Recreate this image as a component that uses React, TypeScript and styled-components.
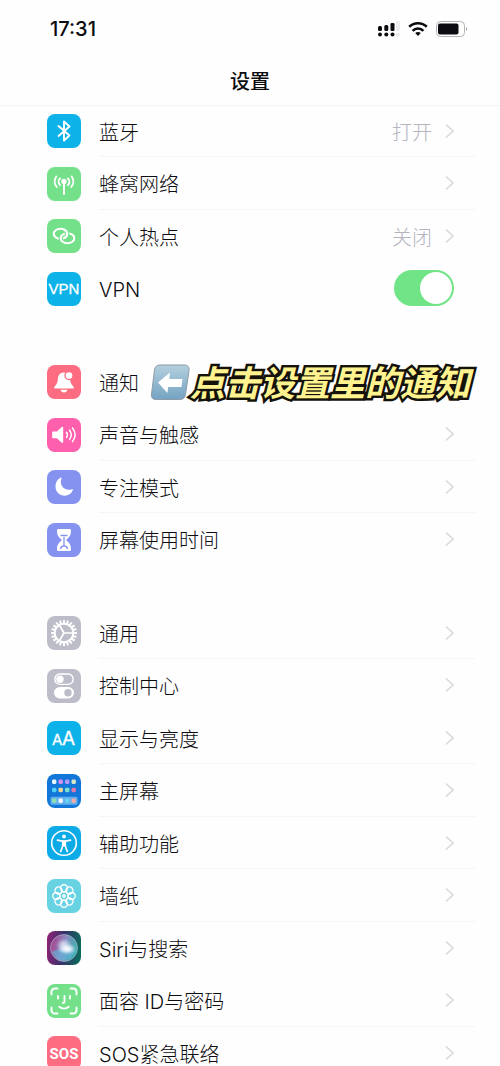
import React from "react";
import styled, { createGlobalStyle } from "styled-components";

const GlobalStyle = createGlobalStyle`
  *, *::before, *::after { box-sizing: border-box; }
  body {
    margin: 0;
    background: #fefefe;
    color: #0c0c10;
    font-family: Inter, "Noto Sans CJK SC", sans-serif;
  }
`;

const Screen = styled.div`
  display: flex;
  flex-direction: column;
  height: 100vh;
  overflow: hidden;
`;

const Header = styled.header`
  flex: none;
  position: relative;
  z-index: 1;
  box-shadow: 0 1px 1px #f4f4f6;
`;

const StatusBar = styled.div`
  display: flex;
  align-items: center;
  justify-content: space-between;
  height: 57px;
  padding: 0 32px 0 50px;
`;

const Clock = styled.time`
  font-size: 20px;
  line-height: 24px;
  font-weight: 500;
`;

const StatusIcons = styled.div`
  display: flex;
  align-items: center;
  gap: 8px;
  svg { display: block; }
`;

const Title = styled.h1`
  margin: 0;
  padding-top: 2px;
  height: 48px;
  font-size: 20px;
  line-height: 46px;
  font-weight: 500;
  text-align: center;
`;

const Groups = styled.main`
  flex: 1;
  min-height: 0;
  overflow: hidden;
  display: flex;
  flex-direction: column;
  gap: 41px;
  padding: 0 24px 0 47px;
`;

const Group = styled.ul`
  flex: none;
  display: grid;
  grid-auto-rows: 52px 53px;
  margin: 0;
  padding: 0;
  list-style: none;
`;

const Item = styled.li`
  position: relative;
  display: grid;
`;

const rowLayout = `
  display: flex;
  align-items: center;
  gap: 18px;
  min-width: 0;
  color: inherit;
  text-decoration: none;
`;

const RowLink = styled.a`${rowLayout}`;
const RowLabel = styled.label`${rowLayout}`;

const Tile = styled.svg`
  flex: none;
  display: block;
  width: 34px;
  height: 34px;
  border-radius: 8px;
`;

const Body = styled.span<{ $line?: boolean }>`
  flex: 1;
  align-self: stretch;
  display: flex;
  align-items: center;
  padding: 0 22px 0 0;
  border-bottom: 1px solid ${(p) => (p.$line ? "#f6f6f8" : "transparent")};
`;

const Name = styled.span`
  flex: 1;
  padding-top: 4px;
  font-size: 20px;
  line-height: 28px;
  font-weight: 300;
`;

const Value = styled.span`
  margin-right: 13px;
  padding-top: 4px;
  color: #b4b4be;
  font-size: 20px;
  line-height: 28px;
  font-weight: 300;
`;

const Switch = styled.input`
  appearance: none;
  flex: none;
  display: grid;
  align-items: center;
  width: 60px;
  height: 36px;
  margin: 0;
  padding: 2px;
  border-radius: 18px;
  background: #d9d9de;
  &::before {
    content: "";
    width: 32px;
    height: 32px;
    border-radius: 50%;
    background: #fff;
  }
  &:checked { background: #72e488; }
  &:checked::before { justify-self: end; }
`;

const Callout = styled.div`
  position: absolute;
  left: 103px;
  top: 4px;
  display: flex;
  align-items: center;
  white-space: nowrap;
  pointer-events: none;
`;

const CalloutText = styled.strong`
  color: #fff38f;
  font-size: 35px;
  line-height: 46px;
  font-weight: 700;
  font-style: italic;
  -webkit-text-stroke: 5px #15120c;
  paint-order: stroke fill;
`;

const Chevron = () => (
  <svg width="9" height="16" viewBox="0 0 9 16" fill="none" stroke="#dadade" strokeWidth="1.600" aria-hidden="true">
    <path d="M1 1.500 8 8l-7 6.500" />
  </svg>
);

const white = { fill: "none", stroke: "#fff", strokeLinecap: "round", strokeLinejoin: "round" } as const;

const gearTeeth = Array.from({ length: 20 }, (_, i) => i * 18);
const petals = Array.from({ length: 8 }, (_, i) => i * 45);

const homeDots = [
  ["#e8f6ff", "#d78cf0", "#b49af5", "#dbe8c8"],
  ["#4fd0f4", "#f0d78c", "#7fe0d0", "#e878a8"],
];

const art: Record<string, { bg: string; draw: React.ReactNode }> = {
  bluetooth: {
    bg: "#0cb2e8",
    draw: <path {...white} strokeWidth="1.900" d="M11.500 12l11 9.500-5.500 5V7.500l5.500 5-11 9.500" />,
  },
  cellular: {
    bg: "#74e08a",
    draw: (
      <g {...white} strokeWidth="1.900">
        <path d="M17 15v12M13 18a4.600 4.600 0 0 1 0-6.500M21 18a4.600 4.600 0 0 0 0-6.500M9.800 20a8.500 8.500 0 0 1-.5-10.500M24.200 20a8.500 8.500 0 0 0 .5-10.500" />
        <circle cx="17" cy="14.500" r="1.700" fill="#fff" />
      </g>
    ),
  },
  hotspot: {
    bg: "#74e08a",
    draw: (
      <g fill="none" stroke="#fff" strokeWidth="2.100">
        <ellipse cx="13.500" cy="14.800" rx="6.800" ry="5" />
        <ellipse cx="20.500" cy="19.200" rx="6.800" ry="5" stroke="#74e08a" strokeWidth="4.200" />
        <ellipse cx="20.500" cy="19.200" rx="6.800" ry="5" />
        <path d="M18.300 11.300A6.800 5 0 0 1 19.500 17.200" stroke="#74e08a" strokeWidth="4.200" />
        <path d="M16.900 10.500A6.800 5 0 0 1 17.900 18.600" strokeLinecap="round" />
      </g>
    ),
  },
  vpn: {
    bg: "#0cb2e8",
    draw: <text x="17" y="22" textAnchor="middle" fill="#fff" stroke="#fff" strokeWidth="0.300" fontSize="15" fontFamily='"Liberation Sans", sans-serif'>VPN</text>,
  },
  notifications: {
    bg: "#fd6c80",
    draw: (
      <>
        <path fill="#fff" d="M17 7.500c-4.200 0-6.100 3-6.200 7-.1 3.700-1.700 5.200-3.300 7.200-.6.800-.2 1.800.8 1.800h17.400c1 0 1.400-1 .8-1.800-1.600-2-3.200-3.500-3.300-7.200C23.100 10.500 21.200 7.500 17 7.500zM13.600 24.800h6.800c-.4 1.700-1.700 2.700-3.400 2.700s-3-1-3.400-2.700z" />
        <circle cx="22" cy="10.500" r="4" fill="#fff" stroke="#fd6c80" strokeWidth="1.300" />
      </>
    ),
  },
  sound: {
    bg: "#fe60ae",
    draw: (
      <>
        <path fill="#fff" d="M6 13.500h3.800l5-4.500c.6-.5 1.400-.2 1.400.6v14.500c0 .8-.8 1.100-1.400.6L9.800 20.200H6c-.6 0-.8-.3-.8-.8v-5.100c0-.5.2-.8.800-.8z" />
        <path {...white} strokeWidth="1.500" d="M19.500 14.300c1.200 1.700 1.200 3.500 0 5.200M22.500 12.300c2.200 2.900 2.200 6.300 0 9.200M25.500 10c3.300 4.300 3.300 9.300 0 13.600" />
      </>
    ),
  },
  focus: {
    bg: "#8592f0",
    draw: <path fill="#fff" d="M13.800 7.500c.5-.2.900.2.700.7-2.800 7 3.200 13.500 10.700 11 .6-.2 1 .3.700.8-1.500 3.600-4.500 5.700-8.200 5.700-5.200 0-9.200-4-9.200-9.200 0-4.200 2.100-7.500 5.300-9z" />,
  },
  screenTime: {
    bg: "#8592f0",
    draw: (
      <>
        <path fill="#fff" d="M11.500 6h11c1 0 1.500.6 1.500 1.500 0 4.500-1.500 6.500-4 8.500-.8.600-.8 1.400 0 2 2.500 2 4 4 4 8.500 0 .9-.5 1.500-1.500 1.500h-11c-1 0-1.500-.6-1.500-1.500 0-4.500 1.500-6.500 4-8.500.8-.6.8-1.400 0-2-2.500-2-4-4-4-8.500 0-.9.500-1.500 1.500-1.500z" />
        <path fill="none" stroke="#8592f0" strokeWidth="1.300" strokeLinecap="round" d="M14 12.500h6M17 14.500v8M13.500 25.500c.6-1.600 1.800-2.500 3.500-2.500s2.900.9 3.500 2.500" />
      </>
    ),
  },
  general: {
    bg: "#bcbdc9",
    draw: (
      <g {...white} strokeWidth="2">
        <circle cx="17" cy="17" r="9.300" />
        {gearTeeth.map((a) => (
          <path key={a} strokeLinecap="butt" d="M17 7.500V4" transform={`rotate(${a} 17 17)`} />
        ))}
        <path strokeWidth="1.700" d="M17 17h9M17 17l-4.600-7.900M17 17l-4.600 7.900" />
      </g>
    ),
  },
  control: {
    bg: "#bcbdc9",
    draw: (
      <>
        <rect x="7.800" y="5" width="18.400" height="10.400" rx="5.200" fill="none" stroke="#fff" strokeWidth="1.400" />
        <circle cx="13" cy="10.200" r="3.700" fill="#fff" />
        <rect x="7" y="18" width="20" height="11.500" rx="5.700" fill="#fff" />
        <circle cx="21" cy="23.700" r="3.700" fill="#bcbdc9" />
      </>
    ),
  },
  display: {
    bg: "#0cb2e8",
    draw: (
      <g fill="#fff" fontWeight="400" stroke="#fff" strokeWidth="0.300">
        <text x="5" y="24" fontSize="15">A</text>
        <text x="15" y="24" fontSize="19">A</text>
      </g>
    ),
  },
  home: {
    bg: "#1277d8",
    draw: (
      <>
        {homeDots.map((line, r) =>
          line.map((c, i) => <rect key={`${r}${i}`} x={5 + i * 6.500} y={5.500 + r * 8.300} width="4.400" height="4.400" rx="1.400" fill={c} />)
        )}
        <rect x="3.500" y="22.700" width="27" height="8" rx="1.500" fill="#62b0ee" />
        {["#8be0b0", "#f2f6fb", "#62d2f0", "#f3aaa8"].map((c, i) => (
          <rect key={c} x={5 + i * 6.500} y="24.500" width="4.400" height="4.400" rx="1.400" fill={c} />
        ))}
      </>
    ),
  },
  accessibility: {
    bg: "#0cabe8",
    draw: (
      <>
        <circle cx="17" cy="17" r="12.300" fill="none" stroke="#fff" strokeWidth="1.600" />
        <circle cx="17" cy="10.500" r="1.900" fill="#fff" />
        <path {...white} strokeWidth="1.700" d="M10.500 14.200l4.700.9h3.600l4.700-.9M15.700 15.500v4.500l-2 5.500M18.300 15.500v4.500l2 5.500" />
        <path fill="#fff" d="M15 14.500h4v6h-4z" />
      </>
    ),
  },
  wallpaper: {
    bg: "#67d2e2",
    draw: (
      <g {...white} strokeWidth="1.400">
        {petals.map((a) => (
          <circle key={a} cx="17" cy="9.300" r="3.500" transform={`rotate(${a} 17 17)`} />
        ))}
        <circle cx="17" cy="17" r="4.400" />
        <circle cx="17" cy="17" r="1.200" />
      </g>
    ),
  },
  siri: {
    bg: "url(#siriBase)",
    draw: (
      <>
        <defs>
          <linearGradient id="siriBase" x1="0" y1="0.400" x2="1" y2="0.500">
            <stop offset="0" stopColor="#8a2277" />
            <stop offset="0.500" stopColor="#33356a" />
            <stop offset="1" stopColor="#0b6a5c" />
          </linearGradient>
          <linearGradient id="siriOrb" x1="0" y1="0.300" x2="1" y2="0.600">
            <stop offset="0" stopColor="#a8408c" />
            <stop offset="0.500" stopColor="#8a8cc0" />
            <stop offset="1" stopColor="#2cb3a8" />
          </linearGradient>
          <radialGradient id="siriGlow">
            <stop offset="0" stopColor="#fff" />
            <stop offset="0.400" stopColor="#f2f6ff" stopOpacity="0.800" />
            <stop offset="1" stopColor="#b8dcf0" stopOpacity="0" />
          </radialGradient>
        </defs>
        <circle cx="17" cy="17" r="13.500" fill="url(#siriOrb)" stroke="#a8b8cc" strokeOpacity="0.700" strokeWidth="1" />
        <path d="M5 21c6-4 12-3 23-1-2 6-7 9.500-12 9.500-5 0-9-4-11-8.500z" fill="#5fb4dc" opacity="0.600" />
        <ellipse cx="17" cy="14" rx="8" ry="7" fill="url(#siriGlow)" opacity="0.700" />
        <ellipse cx="20" cy="18" rx="10" ry="6" fill="url(#siriGlow)" />
      </>
    ),
  },
  faceId: {
    bg: "#74e08a",
    draw: (
      <g {...white} strokeWidth="1.900">
        <path d="M4.500 10.500V8c0-2.300 1.200-3.500 3.500-3.500h2.500M23.500 4.500H26c2.300 0 3.500 1.200 3.500 3.500v2.500M29.500 23.500V26c0 2.300-1.200 3.500-3.500 3.500h-2.500M10.500 29.500H8c-2.300 0-3.500-1.200-3.500-3.500v-2.500" />
        <path d="M11 12v2.500M23 12v2.500M17.500 12v5.500c0 1-.6 1.500-1.700 1.500M12.300 22.800c2.800 2.400 6.600 2.400 9.400 0" />
      </g>
    ),
  },
  sos: {
    bg: "#fd6c80",
    draw: (
      <text x="17" y="23" textAnchor="middle" fill="#fff" fontSize="15" fontWeight="700" fontFamily="Roboto, sans-serif">
        SOS
      </text>
    ),
  },
};

type Row = { icon: string; name: string; value?: string; line?: boolean; toggle?: boolean; callout?: string };

const groups: Row[][] = [
  [
    { icon: "bluetooth", name: "蓝牙", value: "打开", line: true },
    { icon: "cellular", name: "蜂窝网络", line: true },
    { icon: "hotspot", name: "个人热点", value: "关闭" },
    { icon: "vpn", name: "VPN", toggle: true },
  ],
  [
    { icon: "notifications", name: "通知", callout: "点击设置里的通知" },
    { icon: "sound", name: "声音与触感", line: true },
    { icon: "focus", name: "专注模式", line: true },
    { icon: "screenTime", name: "屏幕使用时间" },
  ],
  [
    { icon: "general", name: "通用", line: true },
    { icon: "control", name: "控制中心" },
    { icon: "display", name: "显示与亮度", line: true },
    { icon: "home", name: "主屏幕", line: true },
    { icon: "accessibility", name: "辅助功能", line: true },
    { icon: "wallpaper", name: "墙纸", line: true },
    { icon: "siri", name: "Siri与搜索" },
    { icon: "faceId", name: "面容 ID与密码", line: true },
    { icon: "sos", name: "SOS紧急联络" },
  ],
];

const TileIcon = ({ icon }: { icon: string }) => (
  <Tile viewBox="0 0 34 34" aria-hidden="true">
    <rect width="34" height="34" fill={art[icon].bg} />
    {art[icon].draw}
  </Tile>
);

const ArrowEmoji = () => (
  <svg width="40" height="38" viewBox="0 0 40 38" aria-hidden="true">
    <defs>
      <linearGradient id="arrowTile" x1="0" y1="0" x2="0" y2="1">
        <stop offset="0" stopColor="#b4cfde" />
        <stop offset="1" stopColor="#74a3c2" />
      </linearGradient>
    </defs>
    <path d="M10 1h24c4 0 5.500 2 5 5.500l-3.500 24c-.5 3.500-2.500 5-6 5h-23c-4 0-5.500-2-5-5.500l3-24C5 2.500 7 1 10 1z" fill="url(#arrowTile)" stroke="#8d9ba8" strokeWidth="1" />
    <path d="M8 18.500 20 8.500l-.8 6.500H32.500l-1 8H18.200l-.8 6z" fill="#fff" />
  </svg>
);

const SettingsRow = ({ row }: { row: Row }) => {
  if (row.toggle) {
    return (
      <Item>
        <RowLabel>
          <TileIcon icon={row.icon} />
          <Body>
            <Name>{row.name}</Name>
            <Switch type="checkbox" role="switch" defaultChecked />
          </Body>
        </RowLabel>
      </Item>
    );
  }
  return (
    <Item>
      <RowLink href={`#${row.icon}`}>
        <TileIcon icon={row.icon} />
        <Body $line={row.line}>
          <Name>{row.name}</Name>
          {row.value && <Value>{row.value}</Value>}
          {!row.callout && <Chevron />}
        </Body>
      </RowLink>
      {row.callout && (
        <Callout>
          <ArrowEmoji />
          <CalloutText>{row.callout}</CalloutText>
        </Callout>
      )}
    </Item>
  );
};

export default function App() {
  return (
    <Screen>
      <GlobalStyle />
      <Header>
        <StatusBar>
          <Clock>17:31</Clock>
          <StatusIcons>
            <svg width="24" height="16" viewBox="0 0 24 16" aria-label="信号">
              <g fill="#0c0c10">
                <rect x="2" y="5" width="4" height="5" rx="1.500" />
                <rect x="8.300" y="4" width="4" height="6" rx="1.500" />
                <rect x="14.500" y="2" width="4" height="8" rx="1.300" />
                <circle cx="4" cy="13.500" r="2" />
                <circle cx="10.300" cy="13.500" r="2" />
                <circle cx="16.500" cy="13.500" r="2" />
              </g>
              <g fill="#ececef">
                <rect x="20" y="0" width="4" height="10" rx="1.300" />
                <circle cx="22" cy="13.500" r="2" />
              </g>
            </svg>
            <svg width="20" height="16" viewBox="0 0 20 16" fill="none" stroke="#0c0c10" strokeWidth="2.600" aria-label="无线局域网">
              <path d="M1.200 5.800c5-4.800 12.600-4.800 17.600 0M4.600 9.800c3-3 7.800-3 10.800 0" />
              <path d="M10 15l-2.800-2.900c1.600-1.500 4-1.500 5.600 0z" fill="#0c0c10" stroke="none" />
            </svg>
            <svg width="32" height="16" viewBox="0 0 32 16" aria-label="电池">
              <rect x="0.500" y="0.500" width="28" height="15" rx="4" fill="none" stroke="#b4b4b8" />
              <rect x="2" y="2.500" width="20.500" height="11" rx="2" fill="#0c0c10" />
              <path d="M30 6c1.600.6 1.600 3.400 0 4z" fill="#a8a8ac" />
            </svg>
          </StatusIcons>
        </StatusBar>
        <Title>设置</Title>
      </Header>
      <Groups>
        {groups.map((rows) => (
          <Group key={rows[0].icon}>
            {rows.map((row) => (
              <SettingsRow key={row.icon} row={row} />
            ))}
          </Group>
        ))}
      </Groups>
    </Screen>
  );
}
